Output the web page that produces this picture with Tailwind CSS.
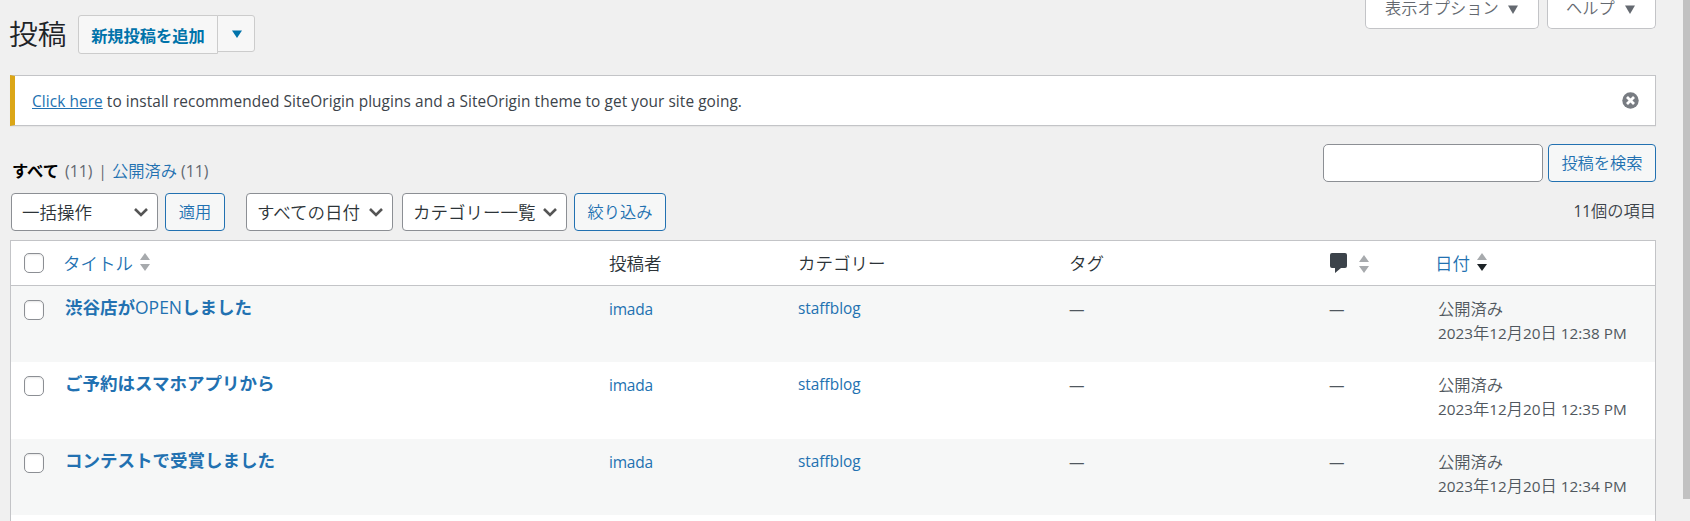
<!DOCTYPE html>
<html lang="ja">
<head>
<meta charset="utf-8">
<title>投稿</title>
<script src="https://cdn.jsdelivr.net/npm/@tailwindcss/browser@4"></script>
</head>
<body class="h-[521px] w-[1690px] overflow-hidden bg-[#f0f0f0] font-['Open_Sans','Noto_Sans_CJK_JP',sans-serif] text-[16px] leading-6 text-[#3c434a]">
<div class="flex h-full justify-between">
<main class="ml-[10px] flex w-[1646px] flex-col whitespace-nowrap">
  <header class="flex h-[75px] shrink-0 justify-between">
    <div class="flex pt-[15px]">
      <h1 class="-ml-px w-[69px] text-[28.75px] leading-[38px] font-[350] text-[#1d2327]">投稿</h1>
      <button class="flex h-[39px] w-[140px] items-center justify-center rounded-l-[3px] border border-[#ccc] bg-[#f7f7f7] text-[16.25px] font-bold text-[#0073aa]"><span class="pt-[2px]">新規投稿を追加</span></button>
      <button class="-ml-px flex h-[37px] w-[38px] items-center justify-center rounded-r-[3px] border border-[#ccc] bg-[#f7f7f7] pl-[2px]"><svg width="10" height="8" fill="#0073aa"><path d="M0 .5h10L5 8z"/></svg></button>
    </div>
    <div class="flex gap-2 text-[16.25px] font-[350] text-[#646970]">
      <button class="flex h-[29px] w-[174px] items-start rounded-b-[5px] border border-t-0 border-[#c3c4c7] bg-white pl-[19px]"><span class="-mt-[4px]">表示オプション</span><svg class="mt-[5px] ml-[9px]" width="10" height="9" fill="#646970"><path d="M0 .5h10L5 9z"/></svg></button>
      <button class="flex h-[29px] w-[109px] items-start rounded-b-[5px] border border-t-0 border-[#c3c4c7] bg-white pl-[18px]"><span class="-mt-[4px]">ヘルプ</span><svg class="mt-[5px] ml-[10px]" width="10" height="9" fill="#646970"><path d="M0 .5h10L5 9z"/></svg></button>
    </div>
  </header>
  <section class="flex h-[51px] shrink-0 items-center justify-between border border-l-[5px] border-[#c3c4c7] border-l-[#dba617] bg-white pr-[16px] pl-[17px] shadow-[0_1px_1px_rgba(0,0,0,0.04)]">
    <p class="pt-[2px] text-[15.4px] tracking-[0.08px]"><a class="text-[#2271b1] underline">Click here</a> to install recommended SiteOrigin plugins and a SiteOrigin theme to get your site going.</p>
    <svg width="17" height="17" viewBox="0 0 17 17"><circle cx="8.5" cy="8.5" r="8.2" fill="#787c82"/><path d="M5 5l7 7M12 5l-7 7" stroke="#fff" stroke-width="2.8"/></svg>
  </section>
  <section class="flex h-[67px] shrink-0 justify-between">
    <div class="flex pt-[33px] pl-[2px] text-[15.8px] leading-6 text-[#646970]"><b class="text-[16.25px] text-black">すべて</b><span class="ml-[6px]">(11)</span><span class="ml-[6px]">|</span><span class="ml-[5px] text-[16.25px] font-[350] text-[#2271b1]">公開済み</span><span class="ml-[4px]">(11)</span></div>
    <div class="flex gap-[5px] pt-[18px]">
      <div class="h-[38px] w-[220px] rounded-[5px] border border-[#8c8f94] bg-white"></div>
      <button class="flex h-[38px] w-[108px] items-center justify-center rounded-[4px] border border-[#2271b1] bg-[#f6f7f7] text-[16.25px] font-[350] text-[#2271b1]">投稿を検索</button>
    </div>
  </section>
  <section class="flex h-[47px] shrink-0 justify-between pl-px font-[350]">
    <div class="flex text-[#2c3338]">
      <div class="flex h-[38px] w-[147px] items-center justify-between rounded-[4px] border border-[#8c8f94] bg-white pr-[9px] pl-[10px] text-[17.5px]"><span>一括操作</span><svg width="14" height="10" fill="none" stroke="#555" stroke-width="2.6"><path d="M1 2l6 6 6-6"/></svg></div>
      <button class="ml-[7px] h-[38px] w-[60px] rounded-[4px] border border-[#2271b1] bg-[#f6f7f7] text-[16.25px] text-[#2271b1]">適用</button>
      <div class="ml-[21px] flex h-[38px] w-[147px] items-center justify-between rounded-[4px] border border-[#8c8f94] bg-white pr-[9px] pl-[10px] text-[17.5px]"><span>すべての日付</span><svg width="14" height="10" fill="none" stroke="#555" stroke-width="2.6"><path d="M1 2l6 6 6-6"/></svg></div>
      <div class="ml-[9px] flex h-[38px] w-[165px] items-center justify-between rounded-[4px] border border-[#8c8f94] bg-white pr-[9px] pl-[10px] text-[17.5px]"><span>カテゴリー一覧</span><svg width="14" height="10" fill="none" stroke="#555" stroke-width="2.6"><path d="M1 2l6 6 6-6"/></svg></div>
      <button class="ml-[7px] h-[38px] w-[92px] rounded-[4px] border border-[#2271b1] bg-[#f6f7f7] text-[16.25px] text-[#2271b1]">絞り込み</button>
    </div>
    <span class="pt-[6px] text-[16.25px]"><span class="text-[15.4px] font-normal">11</span>個の項目</span>
  </section>
  <section class="h-[290px] shrink-0 border border-[#c3c4c7] bg-white">
    <div class="grid h-[45px] grid-cols-[52px_546px_189px_271px_261px_105px_1fr] items-center border-b border-[#c3c4c7] text-[17.5px] font-[350] text-[#2c3338]">
      <span class="ml-[13px] size-5 rounded-[5px] border border-[#8c8f94] bg-white shadow-[inset_0_1px_2px_rgba(0,0,0,0.1)]"></span>
      <span class="flex items-center gap-[7px] text-[#2271b1]">タイトル<svg class="-mt-[2px]" width="10" height="18" fill="#a7aaad"><path d="M5 0l5 7H0zM0 11h10l-5 7z"/></svg></span>
      <span>投稿者</span><span>カテゴリー</span><span>タグ</span>
      <span class="flex items-center gap-[12px]"><svg width="17" height="20" fill="#3c434a"><path d="M2 0h13q2 0 2 2v11q0 2-2 2h-4l-6 5v-5H2q-2 0-2-2V2q0-2 2-2z"/></svg><svg class="mt-[2px]" width="10" height="18" fill="#a7aaad"><path d="M5 0l5 7H0zM0 11h10l-5 7z"/></svg></span>
      <span class="flex items-center gap-[7px] text-[#2271b1]">日付<svg class="-mt-[2px]" width="10" height="18" fill="#a7aaad"><path d="M5 0l5 7H0z"/><path d="M0 11h10l-5 7z" fill="#1d2327"/></svg></span>
    </div>
    <div id="rows"></div>
  </section>
</main>
<div class="h-[499px] w-[7px] bg-[#c1c1c1]"></div>
</div>
<script>
const posts = [
  ['渋谷店がOPENしました', '12:38', 'h-[76px] bg-[#f6f7f7]'],
  ['ご予約はスマホアプリから', '12:35', 'h-[77px] bg-white'],
  ['コンテストで受賞しました', '12:34', 'h-[76px] bg-[#f6f7f7]'],
];
const kanji = (c) => `<span class="text-[16.25px] font-[350]">${c}</span>`;
document.getElementById('rows').innerHTML = posts.map(([title, time, cls]) => `
<div class="grid grid-cols-[54px_544px_189px_271px_260px_109px_1fr] pt-[10px] text-[15.5px] text-[#50575e] ${cls}">
  <span class="mt-[4px] ml-[13px] size-5 rounded-[5px] border border-[#8c8f94] bg-white shadow-[inset_0_1px_2px_rgba(0,0,0,0.1)]"></span>
  <a class="-mt-px text-[17.5px] font-bold text-[#2271b1]">${title.replace('OPEN', '<span class="font-medium">OPEN</span>')}</a>
  <a class="pt-px tracking-[-0.2px] text-[#2271b1]">imada</a>
  <a class="pt-px text-[15.4px] text-[#2271b1]">staffblog</a>
  <span class="pt-px">—</span><span class="pt-px">—</span>
  <span class="pt-px text-[15.3px] leading-[24.4px]">${kanji('公開済み')}<br>2023${kanji('年')}12${kanji('月')}20${kanji('日')} ${time} PM</span>
</div>`).join('');
</script>
</body>
</html>
